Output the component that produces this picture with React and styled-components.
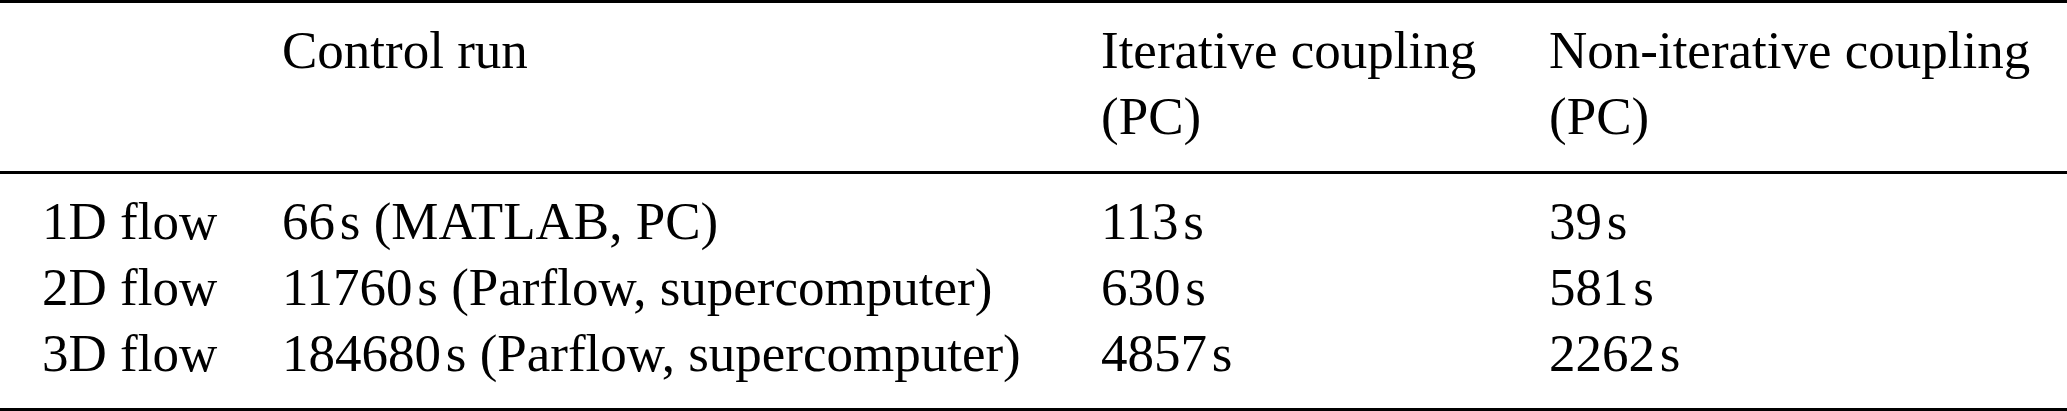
import React from "react";
import styled, { createGlobalStyle } from "styled-components";

const GlobalStyle = createGlobalStyle`
  html, body {
    margin: 0;
    padding: 0;
    background: #fff;
  }
`;

const Table = styled.div`
  width: 2067px;
  height: 411px;
  box-sizing: border-box;
  border-top: 3px solid #000;
  border-bottom: 3px solid #000;
  font-family: "Liberation Serif", "Times New Roman", serif;
  font-size: 53px;
  line-height: 66px;
  color: #000;
  font-variant-ligatures: common-ligatures;
  font-feature-settings: "liga" 1;
`;

const Section = styled.div`
  display: grid;
  grid-template-columns: 240px 819px 448px 1fr;
  padding: 14px 0 22px 42px;
  border-bottom: ${(props) => (props.ruled ? "3px solid #000" : "none")};
`;

const Cell = styled.div`
  white-space: nowrap;
`;

// seconds unit, set close to the number like \,s in TeX
const Unit = styled.span`
  margin-left: 0.09em;
`;

const Time = ({ value, note }) => (
  <>
    {value}
    <Unit>s</Unit>
    {note ? ` (${note})` : ""}
  </>
);

const rows = [
  ["1D flow", 66, "MATLAB, PC", 113, 39],
  ["2D flow", 11760, "Parflow, supercomputer", 630, 581],
  ["3D flow", 184680, "Parflow, supercomputer", 4857, 2262],
];

const App = () => (
  <>
    <GlobalStyle />
    <Table>
      <Section ruled>
        <Cell />
        <Cell>Control run</Cell>
        <Cell>
          Iterative coupling
          <br />
          (PC)
        </Cell>
        <Cell>
          Non-iterative coupling
          <br />
          (PC)
        </Cell>
      </Section>
      <Section>
        {rows.map(([label, control, note, iter, nonIter]) => (
          <React.Fragment key={label}>
            <Cell>{label}</Cell>
            <Cell>
              <Time value={control} note={note} />
            </Cell>
            <Cell>
              <Time value={iter} />
            </Cell>
            <Cell>
              <Time value={nonIter} />
            </Cell>
          </React.Fragment>
        ))}
      </Section>
    </Table>
  </>
);

export default App;
